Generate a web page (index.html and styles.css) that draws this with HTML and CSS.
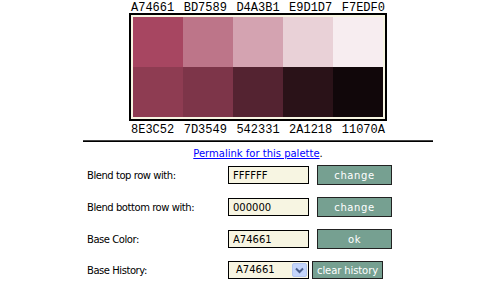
FILE: index.html
```html
<!DOCTYPE html>
<html>
<head>
<meta charset="utf-8">
<link rel="stylesheet" href="styles.css">
</head>
<body>
<div class="page">
  <div class="palette">
    <div class="codes codes-top">
      <span>A74661</span><span>BD7589</span><span>D4A3B1</span><span>E9D1D7</span><span>F7EDF0</span>
    </div>
    <div class="box">
      <div class="sw c1"></div><div class="sw c2"></div><div class="sw c3"></div><div class="sw c4"></div><div class="sw c5"></div>
      <div class="sw c6"></div><div class="sw c7"></div><div class="sw c8"></div><div class="sw c9"></div><div class="sw c10"></div>
    </div>
    <div class="codes codes-bottom">
      <span>8E3C52</span><span>7D3549</span><span>542331</span><span>2A1218</span><span>11070A</span>
    </div>
  </div>
  <div class="rule"></div>
  <p class="permalink"><a href="#">Permalink for this palette</a>.</p>
  <div class="form">
    <div class="row">
      <span class="label">Blend top row with:</span>
      <input class="field" type="text" value="FFFFFF">
      <button class="btn">change</button>
    </div>
    <div class="row">
      <span class="label">Blend bottom row with:</span>
      <input class="field" type="text" value="000000">
      <button class="btn">change</button>
    </div>
    <div class="row">
      <span class="label">Base Color:</span>
      <input class="field" type="text" value="A74661">
      <button class="btn">ok</button>
    </div>
    <div class="row row-last">
      <span class="label">Base History:</span>
      <div class="select"><span class="select-val">A74661</span><span class="select-arrow"><svg width="9" height="7" viewBox="0 0 9 7"><path d="M1 1.5 L4.5 5 L8 1.5" fill="none" stroke="#4a5f8c" stroke-width="2"/></svg></span></div>
      <button class="btn btn-clear">clear history</button>
    </div>
  </div>
</div>
</body>
</html>
```
FILE: styles.css
```css
html, body {
  margin: 0;
  padding: 0;
  background: #ffffff;
}
.page {
  width: 350px;
  margin-left: 83px;
  font-family: "DejaVu Sans", Verdana, sans-serif;
  font-size: 10px;
  color: #000;
}
.palette {
  width: 258px;
  margin-left: 46px;
}
.codes {
  display: flex;
  justify-content: space-between;
  padding: 0 2px;
  font-family: "Liberation Mono", "Courier New", monospace;
  font-size: 12px;
  line-height: 13px;
}
.codes-top {
  height: 13px;
  line-height: 17px;
}
.codes-bottom {
  margin-top: 3px;
}
.box {
  border: 2px solid #000;
  padding: 2px;
  background: #f7f5e2;
  display: grid;
  grid-template-columns: repeat(5, 50px);
  grid-template-rows: 50px 50px;
}
.c1 { background: #A74661; }
.c2 { background: #BD7589; }
.c3 { background: #D4A3B1; }
.c4 { background: #E9D1D7; }
.c5 { background: #F7EDF0; }
.c6 { background: #8E3C52; }
.c7 { background: #7D3549; }
.c8 { background: #542331; }
.c9 { background: #2A1218; }
.c10 { background: #11070A; }
.rule {
  height: 1px;
  background: #000;
  border-top: 1px solid #444;
  margin-top: 3px;
}
.permalink {
  margin: 6px 0 0;
  text-align: center;
  line-height: 12px;
}
.permalink a {
  color: #0000ff;
  text-decoration: underline;
}
.form {
  padding-left: 4px;
  margin-top: 5px;
}
.row {
  display: flex;
  align-items: center;
  height: 20px;
  margin-bottom: 12px;
}
.row-last {
  align-items: flex-start;
  margin-top: 1px;
  margin-bottom: 0;
}
.label {
  width: 141px;
  letter-spacing: -0.45px;
}
.row-last .label {
  line-height: 19px;
}
.field {
  box-sizing: border-box;
  width: 81px;
  height: 18px;
  margin: 0;
  border: 1px solid #000;
  background: #f7f5e2;
  padding: 0 0 0 4px;
  font-family: "DejaVu Sans", Verdana, sans-serif;
  font-size: 10px;
  color: #000;
  outline: none;
}
.btn {
  box-sizing: border-box;
  width: 75px;
  height: 20px;
  margin: 0 0 0 8px;
  padding: 0;
  border: 1px solid #222;
  background: #76a091;
  color: #fff;
  font-family: "DejaVu Sans", Verdana, sans-serif;
  font-size: 10px;
  letter-spacing: 0.6px;
}
.btn-clear {
  width: 71px;
  height: 18px;
  margin-left: 3px;
  letter-spacing: -0.1px;
}
.select {
  box-sizing: border-box;
  width: 81px;
  height: 18px;
  border: 1px solid #000;
  background: #f7f5e2;
  display: flex;
  align-items: center;
  justify-content: space-between;
  padding: 1px 1px 1px 7px;
}
.select-val {
  line-height: 14px;
}
.select-arrow {
  box-sizing: border-box;
  width: 15px;
  height: 14px;
  background: #c4d5fb;
  border: 1px solid #b4c6ef;
  border-radius: 2px;
  display: flex;
  align-items: center;
  justify-content: center;
}
```
